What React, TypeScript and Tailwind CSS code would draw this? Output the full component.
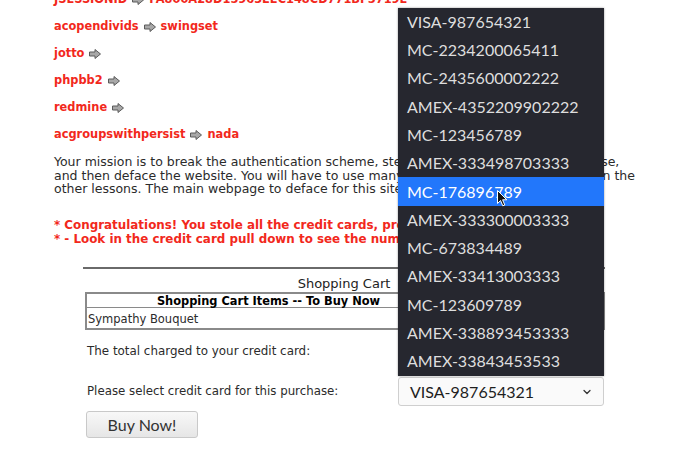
import { ChevronDown } from "lucide-react";

const cards = [
  "VISA-987654321",
  "MC-2234200065411",
  "MC-2435600002222",
  "AMEX-4352209902222",
  "MC-123456789",
  "AMEX-333498703333",
  "MC-176896789",
  "AMEX-333300003333",
  "MC-673834489",
  "AMEX-33413003333",
  "MC-123609789",
  "AMEX-338893453333",
  "AMEX-33843453533",
];

const cookies: [string, string][] = [
  ["JSESSIONID", "FA800A28D15963EEC148CD771BF5719E"],
  ["acopendivids", "swingset"],
  ["jotto", ""],
  ["phpbb2", ""],
  ["redmine", ""],
  ["acgroupswithpersist", "nada"],
];

function Arrow() {
  return (
    <svg width="12" height="10" viewBox="0 0 12 10" className="mx-[5px] inline-block">
      <polygon
        points="0.5,3 6,3 6,0.5 11.5,5 6,9.5 6,7 0.5,7"
        fill="#a8a8a8"
        stroke="#5a5a5a"
        strokeWidth="1"
        strokeLinejoin="round"
      />
    </svg>
  );
}

function Cursor() {
  return (
    <svg width="11" height="17" viewBox="0 0 11 17" className="absolute left-[497px] top-[190px]">
      <path
        d="M0.5 0.5 L0.5 13.5 L3.5 10.5 L5.8 15.8 L7.8 15 L5.6 9.8 L9.8 9.8 Z"
        fill="#111"
        stroke="#fff"
        strokeWidth="1"
        strokeLinejoin="round"
      />
    </svg>
  );
}

export default function App() {
  const selected = 6;

  return (
    <div className="relative h-[456px] w-[679px] overflow-hidden bg-white font-['DejaVu_Sans',sans-serif] text-[12px] text-[#2b2b2b]">
      <div className="-mt-[13.5px] pl-[54px]">
        <div className="w-[580px]">
          {/* cookie list */}
          <div className="flex flex-col text-[11.4px] font-bold text-[#f2281c]">
            {cookies.map(([name, value]) => (
              <div key={name} className="flex h-[27px] items-center whitespace-nowrap">
                <span>{name}</span>
                <Arrow />
                {value && <span>{value}</span>}
              </div>
            ))}
          </div>

          <p className="mt-[6.5px] whitespace-nowrap text-[12.5px] leading-[13.5px]">
            Your mission is to break the authentication scheme, steal all credit cards from a database,
            <br />
            and then deface the website. You will have to use many of the techniques you learned in the
            <br />
            other lessons. The main webpage to deface for this site is 'webgoat.jsp'
          </p>

          <p className="mt-[23.5px] whitespace-nowrap text-[11.9px] font-bold leading-[13.5px] text-[#f2281c]">
            * Congratulations! You stole all the credit cards, proceed to stage 3!
            <br />* - Look in the credit card pull down to see the numbers.
          </p>

          {/* shopping cart */}
          <div className="mx-auto mt-[21px] w-[522px]">
            <div className="border-t-2 border-[#6a6a6a]" />
            <div className="h-[23px] pt-[7px] text-center text-[13px] leading-[15px] text-[#222]">
              Shopping Cart
            </div>
            <div className="ml-[2px] border-2 border-[#8a8a8a]">
              <div className="grid h-[14px] grid-cols-[363px_1fr] border-b border-[#8a8a8a] leading-[14px]">
                <div className="text-center text-[11.4px] font-bold text-black">Shopping Cart Items -- To Buy Now</div>
                <div className="border-l border-[#8a8a8a]" />
              </div>
              <div className="grid h-[20px] grid-cols-[363px_1fr]">
                <div className="pl-[1px] pt-[5px] text-[11.5px] leading-[13px]">Sympathy Bouquet</div>
                <div className="border-l border-[#8a8a8a]" />
              </div>
            </div>

            <div className="mt-[9px] flex h-[26px] items-center pl-[4px] text-[11.9px]">
              The total charged to your credit card:
            </div>

            <div className="mt-[12px] grid h-[29px] grid-cols-[311px_206px] items-center pl-[4px] text-[11.8px]">
              <div>Please select credit card for this purchase:</div>
              <div className="relative h-[29px]">
                {/* open dropdown list */}
                <div className="absolute bottom-[calc(100%+1.5px)] left-0 w-[206px] bg-[#26272f] font-['Lato',sans-serif] text-[16px] text-[#dedede] shadow-[0_0_2px_rgba(0,0,0,0.4)]">
                  {cards.map((card, i) => (
                    <div
                      key={card}
                      className={`flex h-[28.3px] items-center pl-[9px] ${i === selected ? "bg-[#2277fb] text-white" : ""}`}
                    >
                      {card}
                    </div>
                  ))}
                </div>
                <div className="flex h-full items-center justify-between rounded-[3px] border border-[#cfcfcf] bg-[#fafafa] pl-[11px] pr-[10px] font-['Lato',sans-serif] text-[16px] text-[#1e1e1e]">
                  <span>VISA-987654321</span>
                  <ChevronDown size={12} strokeWidth={2.5} className="text-[#333]" />
                </div>
              </div>
            </div>

            <button className="mt-[5px] ml-[3px] h-[27px] w-[112px] rounded-[3px] border border-[#c9c9c9] bg-gradient-to-b from-[#f8f8f8] to-[#e6e6e6] font-['Lato',sans-serif] text-[16px] text-[#333]">
              Buy Now!
            </button>
          </div>
        </div>
      </div>
      <Cursor />
    </div>
  );
}
